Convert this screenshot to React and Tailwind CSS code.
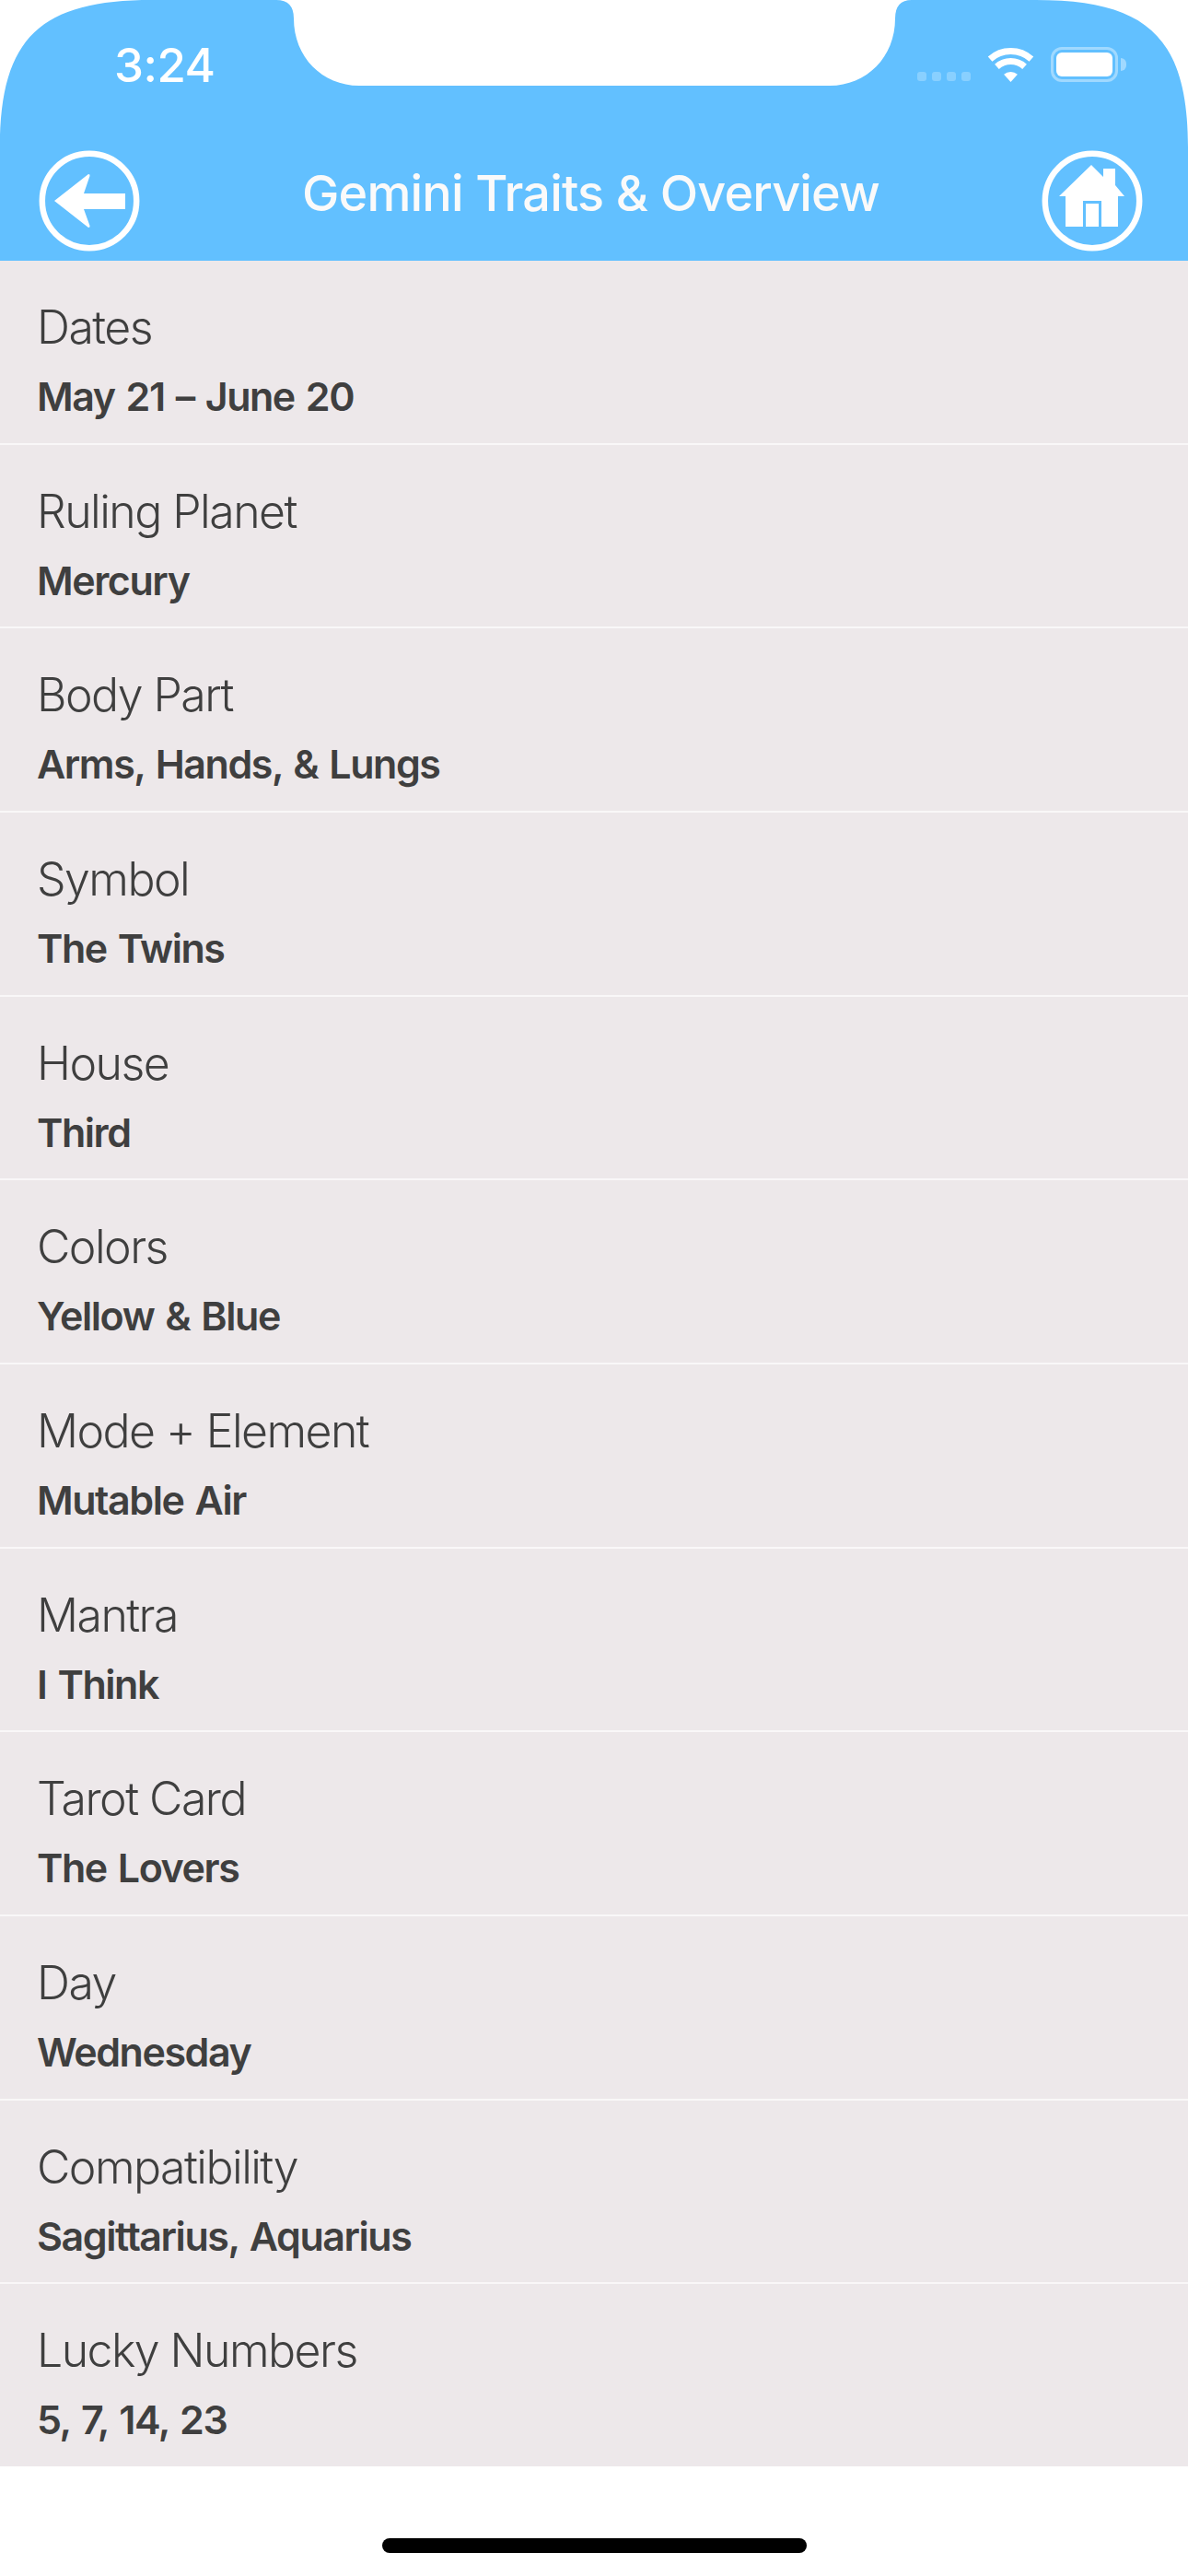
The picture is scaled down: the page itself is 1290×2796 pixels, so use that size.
const ROWS = [
  { label: 'Dates', value: 'May 21 – June 20' },
  { label: 'Ruling Planet', value: 'Mercury' },
  { label: 'Body Part', value: 'Arms, Hands, & Lungs' },
  { label: 'Symbol', value: 'The Twins' },
  { label: 'House', value: 'Third' },
  { label: 'Colors', value: 'Yellow & Blue' },
  { label: 'Mode + Element', value: 'Mutable Air' },
  { label: 'Mantra', value: 'I Think' },
  { label: 'Tarot Card', value: 'The Lovers' },
  { label: 'Day', value: 'Wednesday' },
  { label: 'Compatibility', value: 'Sagittarius, Aquarius' },
  { label: 'Lucky Numbers', value: '5, 7, 14, 23' },
]

function BackIcon() {
  return (
    <svg width="110" height="110" viewBox="0 0 110 110" fill="none">
      <circle cx="55" cy="55" r="51.2" stroke="#fff" strokeWidth="6.5" />
      <path d="M17 55 L54 26 Q56 26 55.5 28 L49 47 H94 V64 H49 L55.5 82 Q56 84 54 84 Z" fill="#fff" />
    </svg>
  )
}

function HomeIcon() {
  return (
    <svg width="110" height="110" viewBox="0 0 110 110" fill="none">
      <circle cx="55" cy="55" r="51.2" stroke="#fff" strokeWidth="6.5" />
      <path d="M54 16 L67 29 V20 H80 V38 L90 50 H83 V83 H26 V50 H19 Z" fill="#fff" />
      <path d="M46.5 83 V56.5 H63.5 V83" stroke="#62c0ff" strokeWidth="3" />
    </svg>
  )
}

function WifiIcon() {
  return (
    <svg width="52" height="40" viewBox="0 0 52 40" fill="none">
      <path d="M3.1 14.1 A33.5 33.5 0 0 1 47.9 14.1" stroke="#fff" strokeWidth="7" />
      <path d="M10.45 22.3 A22.5 22.5 0 0 1 40.55 22.3" stroke="#fff" strokeWidth="7" />
      <path d="M25.5 39 L18.1 30.8 A11 11 0 0 1 32.9 30.8 Z" fill="#fff" />
    </svg>
  )
}

function Notch() {
  return (
    <svg className="absolute top-0 left-[300px]" width="690" height="94" viewBox="0 0 690 94">
      <path d="M0 0 Q19 0 19 20 C19 62 50 93 90 93 H601 C641 93 672 62 672 20 Q672 0 690 0 Z" fill="#fff" />
    </svg>
  )
}

// screen corners are continuous curves, a plain border radius looks too round
function Corner({ className }) {
  return (
    <svg className={className} width="165" height="160" viewBox="0 0 165 160">
      <path d="M0 0 H165 C45 0 0 40 0 160 Z" fill="#fff" />
    </svg>
  )
}

function StatusBar() {
  return (
    <div className="flex items-start justify-between h-[163px] pl-[124px] pr-[67px]">
      <span className="mt-[41px] text-[51px] leading-[60px] font-[450] text-white tracking-[-0.5px]">3:24</span>
      <div className="flex items-start mt-[50px]">
        <div className="flex gap-[6px] mt-[28px] mr-[18px]">
          <span className="w-[10px] h-[10px] rounded-[3px] bg-white/25" />
          <span className="w-[10px] h-[10px] rounded-[3px] bg-white/25" />
          <span className="w-[10px] h-[10px] rounded-[3px] bg-white/25" />
          <span className="w-[10px] h-[10px] rounded-[3px] bg-white/25" />
        </div>
        <WifiIcon />
        <div className="flex items-center ml-[17px] mt-[1px]">
          <div className="w-[73px] h-[38px] rounded-[12px] border-[3px] border-white/40 p-[3px]">
            <div className="w-full h-full rounded-[6px] bg-white" />
          </div>
          <span className="w-[6px] h-[14px] ml-[3px] rounded-r-full bg-white/40" />
        </div>
      </div>
    </div>
  )
}

export default function App() {
  return (
    <div className="relative w-[1290px] h-[2796px] bg-white font-['Inter',sans-serif] overflow-hidden">
      <header className="h-[283px] bg-[#62c0ff]">
        <StatusBar />
        <div className="flex items-center justify-between pl-[42px] pr-[49px]">
          <BackIcon />
          <h1 className="mb-[17px] text-[54px] leading-[64px] font-medium text-[#fafafa] tracking-[-0.85px]">Gemini Traits &amp; Overview</h1>
          <HomeIcon />
        </div>
      </header>
      <Corner className="absolute top-0 left-0" />
      <Corner className="absolute top-0 right-0 -scale-x-100" />
      <Notch />

      <ul className="bg-[#ede8ea]">
        {ROWS.map(r => (
          <li
            key={r.label}
            className="h-[199.67px] pt-[42px] pl-[40px] border-b-2 border-[#f9f7f8] last:border-b-0 last:h-[197.67px]"
          >
            <p className="text-[50px] leading-[60px] font-[365] text-[#3f3f3f] tracking-[-1.55px]">{r.label}</p>
            <p className="mt-[20px] text-[43px] leading-[50px] font-semibold text-[#3f3f3f] tracking-[-1.45px] [word-spacing:2.6px]">{r.value}</p>
          </li>
        ))}
      </ul>

      <div className="flex justify-center pt-[78px]">
        <div className="w-[461px] h-[16px] rounded-full bg-black" />
      </div>
    </div>
  )
}
